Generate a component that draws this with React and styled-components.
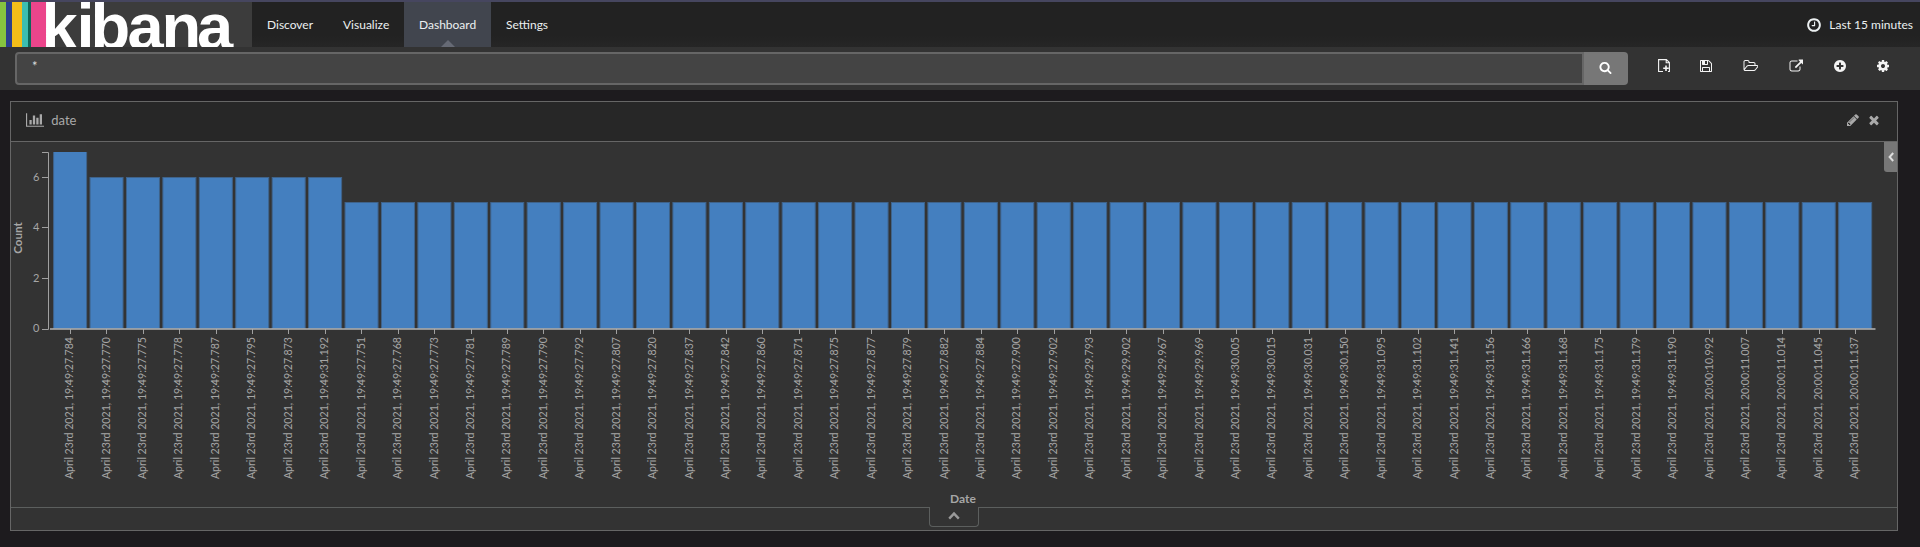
import React from "react";
import styled, { createGlobalStyle } from "styled-components";

const GlobalStyle = createGlobalStyle`
  * { box-sizing: border-box; }
  body {
    margin: 0;
    background: #1d1b1e;
    color: #e6e6e6;
    font-family: Lato, "Liberation Sans", sans-serif;
    font-size: 12px;
    overflow: hidden;
  }
`;

const Page = styled.div`
  height: 547px;
  border-top: 2px solid #46465f;
`;

const Navbar = styled.header`
  display: flex;
  align-items: stretch;
  height: 45px;
  background: linear-gradient(#222 75%, #262626);
`;

const Brand = styled.a`
  display: block;
  width: 252px;
  background: #3c3c3c;
  svg { display: block; }
`;

const NavList = styled.nav`
  display: flex;
  flex: 1;
`;

const NavItem = styled.a`
  position: relative;
  width: ${(p) => p.$width}px;
  padding-left: 15px;
  line-height: 45px;
  color: #ecf0f1;
  background: ${(p) => (p.$active ? "#41454e" : "transparent")};
  &::after {
    content: "";
    display: ${(p) => (p.$active ? "block" : "none")};
    position: absolute;
    bottom: 0;
    left: 50%;
    margin-left: -7px;
    border: 7px solid transparent;
    border-top: 0;
    border-bottom-color: #666a75;
  }
`;

const TimePicker = styled.div`
  display: flex;
  align-items: center;
  gap: 7px;
  padding-right: 7px;
  color: #ecf0f1;
`;

const QueryBar = styled.div`
  display: flex;
  height: 43px;
  padding: 5px 0 5px 15px;
  background: #333;
`;

const QueryInput = styled.div`
  width: 1569px;
  height: 33px;
  padding: 0 15px;
  line-height: 25px;
  font-size: 13px;
  background: #444;
  border: 2px solid #666;
  border-radius: 4px 0 0 4px;
  color: #ddd;
`;

const SearchButton = styled.div`
  display: grid;
  place-items: center;
  width: 44px;
  height: 33px;
  padding: 0 2px 2px 0;
  color: #fff;
  background: #777;
  border-radius: 0 4px 4px 0;
`;

const Tools = styled.div`
  display: flex;
  height: 28px;
  margin-left: 14px;
`;

const Tool = styled.div`
  display: grid;
  place-items: center;
  width: ${(p) => p.$width}px;
  color: #f4f4f4;
`;

const Icon = styled.svg`
  display: block;
  fill: currentColor;
`;

const Panel = styled.section`
  width: 1888px;
  height: 430px;
  margin: 11px 0 0 10px;
  border: 1px solid #666;
  background: #333;
`;

const PanelHeader = styled.div`
  display: flex;
  align-items: center;
  height: 40px;
  padding: 0 16px 4px 15px;
  border-bottom: 1px solid #666;
  background: #272727;
  color: #a9a9a9;
`;

const PanelTitle = styled.span`
  flex: 1;
  margin-left: 7px;
  font-size: 13px;
`;

const PanelActions = styled.div`
  display: flex;
  gap: 7px;
`;

const PanelBody = styled.div`
  position: relative;
  height: 366px;
  border-bottom: 1px solid #5c5f5e;
`;

const Chart = styled.svg`
  display: block;
  font-family: Lato, "Liberation Sans", sans-serif;
  fill: #a6a6a6;
`;

const LegendToggle = styled.div`
  position: absolute;
  top: 0;
  right: 0;
  display: grid;
  place-items: center;
  width: 13px;
  height: 30px;
  background: #777;
  border-bottom-left-radius: 3px;
`;

const SpyToggle = styled.div`
  position: absolute;
  top: 365px;
  left: 918px;
  display: grid;
  place-items: center;
  width: 50px;
  height: 20px;
  padding-bottom: 2px;
  background: #333;
  border: 1px solid #5c5f5e;
  border-top: 0;
  border-radius: 0 0 4px 4px;
`;

const glyphs = {
  save: "M384 1536h768v-384h-768v384zm896 0h128v-896q0-14-10-38.5t-20-34.5l-281-281q-10-10-34-20t-39-10v416q0 40-28 68t-68 28h-576q-40 0-68-28t-28-68v-416h-128v1280h128v-416q0-40 28-68t68-28h832q40 0 68 28t28 68v416zm-384-928v-320q0-13-9.5-22.5t-22.5-9.5h-192q-13 0-22.5 9.5t-9.5 22.5v320q0 13 9.5 22.5t22.5 9.5h192q13 0 22.5-9.5t9.5-22.5zm640 32v928q0 40-28 68t-68 28h-1344q-40 0-68-28t-28-68v-1344q0-40 28-68t68-28h928q40 0 88 20t76 48l280 280q28 28 48 76t20 88z",
  open: "M1845 931q0-35-53-35h-1088q-40 0-85.5 21.5t-71.5 52.5l-294 363q-18 24-18 40 0 35 53 35h1088q40 0 86-22t71-53l294-363q18-22 18-39zm-1141-163h768v-160q0-40-28-68t-68-28h-576q-40 0-68-28t-28-68v-64q0-40-28-68t-68-28h-320q-40 0-68 28t-28 68v853l256-315q44-53 116-87.5t140-34.5zm1269 163q0 62-46 120l-295 363q-43 53-116 87.5t-140 34.5h-1088q-92 0-158-66t-66-158v-960q0-92 66-158t158-66h320q92 0 158 66t66 158v32h544q92 0 158 66t66 158v160h192q54 0 99 24.5t67 70.5q15 32 15 68z",
  share: "M1472 989v320q0 119-84.5 203.5t-203.5 84.5h-832q-119 0-203.5-84.5t-84.5-203.5v-832q0-119 84.5-203.5t203.5-84.5h704q14 0 23 9t9 23v64q0 14-9 23t-23 9h-704q-66 0-113 47t-47 113v832q0 66 47 113t113 47h832q66 0 113-47t47-113v-320q0-14 9-23t23-9h64q14 0 23 9t9 23zm384-864v512q0 26-19 45t-45 19-45-19l-176-176-652 652q-10 10-23 10t-23-10l-114-114q-10-10-10-23t10-23l652-652-176-176q-19-19-19-45t19-45 45-19h512q26 0 45 19t19 45z",
  add: "M1344 960v-128q0-26-19-45t-45-19h-256v-256q0-26-19-45t-45-19h-128q-26 0-45 19t-19 45v256h-256q-26 0-45 19t-19 45v128q0 26 19 45t45 19h256v256q0 26 19 45t45 19h128q26 0 45-19t19-45v-256h256q26 0 45-19t19-45zm320-64q0 209-103 385.5t-279.5 279.5-385.5 103-385.5-103-279.5-279.5-103-385.5 103-385.5 279.5-279.5 385.5-103 385.5 103 279.5 279.5 103 385.5z",
  cog: "M1152 896q0-106-75-181t-181-75-181 75-75 181 75 181 181 75 181-75 75-181zm512-109v222q0 12-8 23t-20 13l-185 28q-19 54-39 91 35 50 107 138 10 12 10 25t-9 23q-27 37-99 108t-94 71q-12 0-26-9l-138-108q-44 23-91 38-16 136-29 186-7 28-36 28h-222q-14 0-24.5-8.5t-11.5-21.5l-28-184q-49-16-90-37l-141 107q-10 9-25 9-14 0-25-11-126-114-165-168-7-10-7-23 0-12 8-23 15-21 51-66.5t54-70.5q-27-50-41-99l-183-27q-13-2-21-12.5t-8-23.5v-222q0-12 8-23t19-13l186-28q14-46 39-92-40-57-107-138-10-12-10-24 0-10 9-23 26-36 98.5-107.5t94.5-71.5q13 0 26 10l138 107q44-23 91-38 16-136 29-186 7-28 36-28h222q14 0 24.5 8.5t11.5 21.5l28 184q49 16 90 37l142-107q9-9 24-9 13 0 25 10 129 119 165 170 7 8 7 22 0 12-8 23-15 21-51 66.5t-54 70.5q26 50 41 98l183 28q13 2 21 12.5t8 23.5z",
  search: "M1216 832q0-185-131.5-316.5t-316.5-131.5-316.5 131.5-131.5 316.5 131.5 316.5 316.5 131.5 316.5-131.5 131.5-316.5zm512 832q0 52-38 90t-90 38q-54 0-90-38l-343-342q-179 124-399 124-143 0-273.5-55.5t-225-150-150-225-55.5-273.5 55.5-273.5 150-225 225-150 273.5-55.5 273.5 55.5 225 150 150 225 55.5 273.5q0 220-124 399l343 343q37 37 37 90z",
  pencil: "M491 1536l91-91-235-235-91 91v107h128v128h107zm523-928q0-22-22-22-10 0-17 7l-542 542q-7 7-7 17 0 22 22 22 10 0 17-7l542-542q7-7 7-17zm-54-192l416 416-832 832h-416v-416zm683 96q0 53-37 90l-166 166-416-416 166-165q36-38 90-38 53 0 91 38l235 234q37 39 37 91z",
  times: "M1490 1322q0 40-28 68l-136 136q-28 28-68 28t-68-28l-294-294-294 294q-28 28-68 28t-68-28l-136-136q-28-28-28-68t28-68l294-294-294-294q-28-28-28-68t28-68l136-136q28-28 68-28t68 28l294 294 294-294q28-28 68-28t68 28l136 136q28 28 28 68t-28 68l-294 294 294 294q28 28 28 68z",
  bars: "M640 896v512h-256v-512h256zm384-512v1024h-256v-1024h256zm1024 1152v128h-2048v-1536h128v1408h1920zm-640-896v768h-256v-768h256zm384-384v1152h-256v-1152h256z",
  clock: "M1024 544v448q0 14-9 23t-23 9h-320q-14 0-23-9t-9-23v-64q0-14 9-23t23-9h224v-352q0-14 9-23t23-9h64q14 0 23 9t9 23zm416 352q0-148-73-273t-198-198-273-73-273 73-198 198-73 273 73 273 198 198 273 73 273-73 198-198 73-273zm224 0q0 209-103 385.5t-279.5 279.5-385.5 103-385.5-103-279.5-279.5-103-385.5 103-385.5 279.5-279.5 385.5-103 385.5 103 279.5 279.5 103 385.5z",
};

const Glyph = ({ name, size = 14, box = 1792 }) => (
  <Icon width={(size * box) / 1792} height={size} viewBox={`0 0 ${box} 1792`}>
    <path d={glyphs[name]} />
  </Icon>
);

const NewFile = () => (
  <Icon width="12" height="14" viewBox="0 0 12 14">
    <path
      d="M5 12.5H.6V.6h7.8l3 3v8.9H10M8.2.6v3.2h3.2"
      fill="none"
      stroke="currentColor"
      strokeWidth="1.1"
    />
    <path d="M7.2 6.4h1.6v2h2V10h-2v2H7.2v-2h-2V8.4h2z" />
  </Icon>
);

const stripes = [
  ["#86c440", 0, 6],
  ["#2b3f8c", 6, 6],
  ["#f3bd19", 12, 10],
  ["#3cbeb1", 22, 6],
  ["#0e6759", 28, 3],
  ["#eb458b", 31, 15],
];

const Logo = () => (
  <svg width="252" height="45" viewBox="0 2 252 45">
    {stripes.map(([fill, x, w]) => (
      <rect key={x} x={x} y="2" width={w} height="45" fill={fill} />
    ))}
    <text
      x="41.5 76.5 90.5 127.5 161.5 197"
      y="49"
      fill="#fff"
      fontFamily="Liberation Sans, sans-serif"
      fontWeight="700"
      fontSize="65"
    >
      kibana
    </text>
  </svg>
);

const times = (
  "27.784 27.770 27.775 27.778 27.787 27.795 27.873 31.192 27.751 27.768 " +
  "27.773 27.781 27.789 27.790 27.792 27.807 27.820 27.837 27.842 27.860 " +
  "27.871 27.875 27.877 27.879 27.882 27.884 27.900 27.902 29.793 29.902 " +
  "29.967 29.969 30.005 30.015 30.031 30.150 31.095 31.102 31.141 31.156 " +
  "31.166 31.168 31.175 31.179 31.190"
)
  .split(" ")
  .map((t) => `19:49:${t}`)
  .concat("20:00:10.992", "20:00:11.007", "20:00:11.014", "20:00:11.045", "20:00:11.137");

const data = times.map((time, i) => ({
  label: `April 23rd 2021, ${time}`,
  count: i === 0 ? 7 : i < 8 ? 6 : 5,
}));

const BASE = 186.5;
const STEP = 36.43;
const barHeights = { 5: 126, 6: 151, 7: 177 };

const Histogram = () => (
  <Chart width="1886" height="365">
    <clipPath id="plot">
      <rect x="38" y="10" width="1828" height="178" />
    </clipPath>
    {data.map(({ label, count }, i) => {
      const x = 42.6 + i * STEP;
      const tick = Math.round(x + 16.3) + 0.5;
      return (
        <g key={label}>
          <rect
            x={x}
            y={BASE - barHeights[count]}
            width="33"
            height={barHeights[count]}
            fill="#447fbf"
            stroke="#3f638b"
            clipPath="url(#plot)"
          />
          <path d={`M${tick} 187V192`} stroke="#a0a0a0" />
          <text
            transform={`translate(${x + 19.6} 195) rotate(-90)`}
            textAnchor="end"
            fontSize="10.6"
          >
            {label}
          </text>
        </g>
      );
    })}
    <path d="M39 187H1864.5" stroke="#b4b4b4" strokeWidth="2" strokeOpacity="0.75" />
    <path d="M31 10.5H37.5V187.5H31M31 35.5h6M31 85.5h6M31 136.5h6" fill="none" stroke="#a0a0a0" />
    {[[6, 39], [4, 89], [2, 140], [0, 190]].map(([n, y]) => (
      <text key={n} x="28.5" y={y} textAnchor="end" fontSize="11">
        {n}
      </text>
    ))}
    <text transform="translate(11 96) rotate(-90)" textAnchor="middle" fontSize="11.6" fontWeight="700">
      Count
    </text>
    <text x="952" y="361" textAnchor="middle" fontSize="12" fontWeight="700">
      Date
    </text>
  </Chart>
);

export default function App() {
  return (
    <Page>
      <GlobalStyle />
      <Navbar>
        <Brand>
          <Logo />
        </Brand>
        <NavList>
          <NavItem $width={76}>Discover</NavItem>
          <NavItem $width={76}>Visualize</NavItem>
          <NavItem $width={87} $active>
            Dashboard
          </NavItem>
          <NavItem $width={72}>Settings</NavItem>
        </NavList>
        <TimePicker>
          <Glyph name="clock" size={16} />
          <span>Last 15 minutes</span>
        </TimePicker>
      </Navbar>
      <QueryBar>
        <QueryInput>*</QueryInput>
        <SearchButton>
          <Glyph name="search" size={13} />
        </SearchButton>
        <Tools>
          <Tool $width={44}><NewFile /></Tool>
          <Tool $width={40}><Glyph name="save" box={1536} /></Tool>
          <Tool $width={49}><Glyph name="open" box={1973} /></Tool>
          <Tool $width={42}><Glyph name="share" /></Tool>
          <Tool $width={46}><Glyph name="add" /></Tool>
          <Tool $width={40}><Glyph name="cog" /></Tool>
        </Tools>
      </QueryBar>
      <Panel>
        <PanelHeader>
          <Glyph name="bars" size={16} box={2048} />
          <PanelTitle>date</PanelTitle>
          <PanelActions>
            <Glyph name="pencil" />
            <Glyph name="times" />
          </PanelActions>
        </PanelHeader>
        <PanelBody>
          <Histogram />
          <LegendToggle>
            <Icon width="6" height="10" viewBox="0 0 6 10">
              <path d="M5.2 1 1.6 5l3.6 4" fill="none" stroke="#ddd" strokeWidth="2" />
            </Icon>
          </LegendToggle>
          <SpyToggle>
            <Icon width="12" height="9" viewBox="0 0 12 9">
              <path d="M1.2 7.6 6 2.6l4.8 5" fill="none" stroke="#999" strokeWidth="2.4" />
            </Icon>
          </SpyToggle>
        </PanelBody>
      </Panel>
    </Page>
  );
}
